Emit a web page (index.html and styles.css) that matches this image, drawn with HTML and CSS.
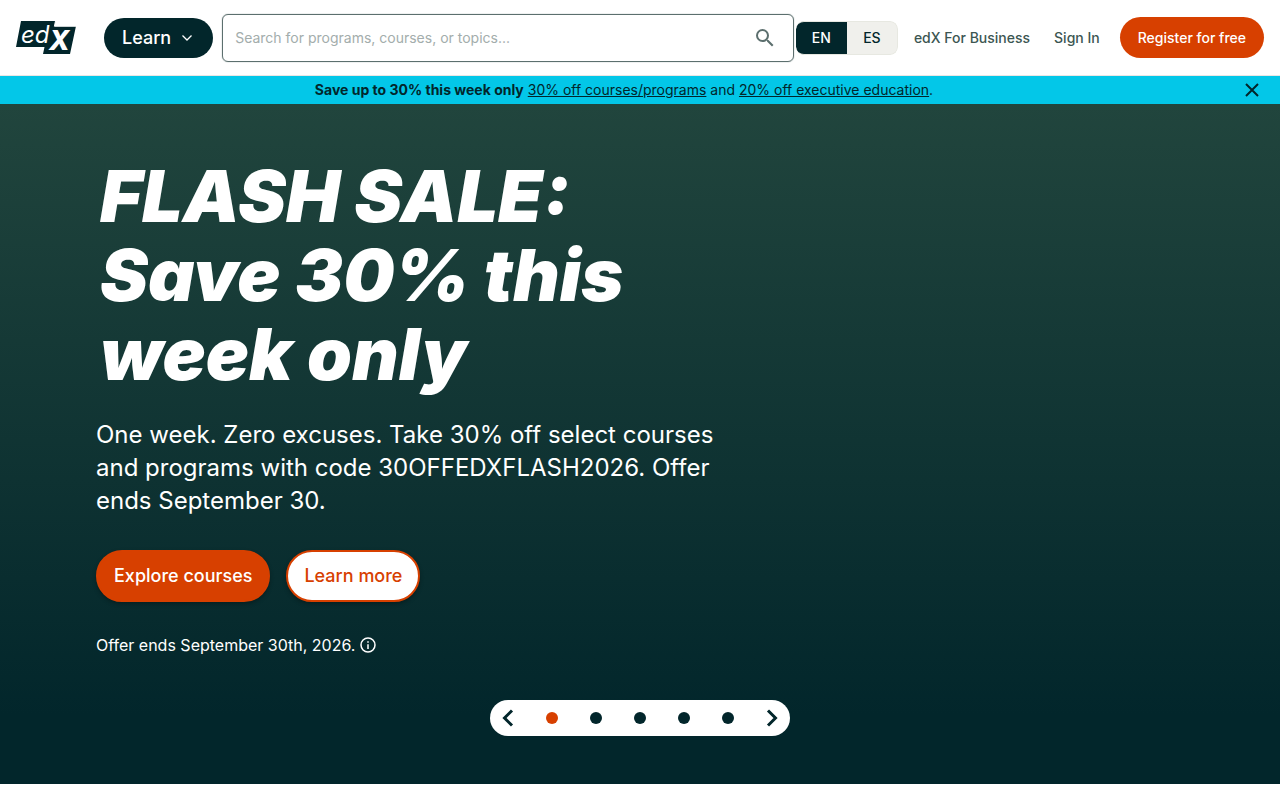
FILE: index.html
```
<!DOCTYPE html>
<html lang="en">
<head>
    <meta charset="UTF-8">
    <meta name="viewport" content="width=device-width, initial-scale=1.0">
    <title>edX</title>
    <link rel="stylesheet" href="styles.css">
</head>
<body>
    <header class="site-header">
        <a href="#" class="logo" aria-label="edX home">
            <svg width="60" height="34" viewBox="0 0 60 34">
                <path class="logo-box" d="M5 0H39.500L38.500 5H60L54 33H27L28.500 26H0Z"/>
                <path class="logo-line" d="M39.500 0L38.400 5.300H60"/>
                <text class="logo-ed" x="5" y="22">ed</text>
                <text class="logo-x" x="33" y="29">X</text>
            </svg>
        </a>

        <button class="learn-button" type="button">
            Learn
            <svg width="12" height="8" viewBox="0 0 12 8"><path d="M1.500 1.500L6 6L10.500 1.500"/></svg>
        </button>

        <form class="search" role="search">
            <input type="text" class="search-input" aria-label="Search" placeholder="Search for programs, courses, or topics...">
            <button class="search-button" type="button" aria-label="Submit search">
                <svg width="24" height="24" viewBox="0 0 24 24"><path d="M15.500 14h-.79l-.28-.27A6.470 6.470 0 0 0 16 9.500 6.500 6.500 0 1 0 9.500 16c1.610 0 3.090-.59 4.230-1.570l.27.28v.79l5 4.990L20.490 19l-4.990-5zm-6 0C7.010 14 5 11.990 5 9.500S7.010 5 9.500 5 14 7.010 14 9.500 11.990 14 9.500 14z"/></svg>
            </button>
        </form>

        <div class="language">
            <button class="language-option active" type="button">EN</button>
            <button class="language-option" type="button">ES</button>
        </div>

        <nav class="header-nav">
            <a href="#">edX For Business</a>
            <a href="#">Sign In</a>
        </nav>
        <a href="#" class="register-button">Register for free</a>
    </header>

    <div class="promo-bar">
        <p class="promo-text"><strong>Save up to 30% this week only</strong> <a href="#">30% off courses/programs</a> and <a href="#">20% off executive education</a>.</p>
        <button class="promo-close" type="button" aria-label="Close">
            <svg width="14" height="14" viewBox="0 0 14 14"><path d="M1 1L13 13M13 1L1 13"/></svg>
        </button>
    </div>

    <main class="hero">
        <div class="hero-content">
            <h1 class="hero-title">FLASH SALE: Save 30% this week only</h1>
            <p class="hero-text">One week. Zero excuses. Take 30% off select courses and programs with code 30OFFEDXFLASH2026. Offer ends September 30.</p>
            <div class="hero-actions">
                <a href="#" class="hero-button">Explore courses</a>
                <a href="#" class="hero-button outline">Learn more</a>
            </div>
            <p class="hero-note">
                Offer ends September 30th, 2026.
                <svg width="16" height="16" viewBox="0 0 16 16"><circle cx="8" cy="8" r="7"/><path d="M8 7.200V12M8 4.200V5.800"/></svg>
            </p>
        </div>

        <div class="carousel">
            <button class="arrow" type="button" aria-label="Previous slide">
                <svg width="12" height="18" viewBox="0 0 12 18"><path d="M10 1.500L2.500 9L10 16.500"/></svg>
            </button>
            <button class="dot active" type="button" aria-label="Slide 1"></button>
            <button class="dot" type="button" aria-label="Slide 2"></button>
            <button class="dot" type="button" aria-label="Slide 3"></button>
            <button class="dot" type="button" aria-label="Slide 4"></button>
            <button class="dot" type="button" aria-label="Slide 5"></button>
            <button class="arrow" type="button" aria-label="Next slide">
                <svg width="12" height="18" viewBox="0 0 12 18"><path d="M2 1.500L9.500 9L2 16.500"/></svg>
            </button>
        </div>
    </main>
</body>
</html>
```
FILE: styles.css
```
* {
    box-sizing: border-box;
    margin: 0;
    padding: 0;
}

body {
    background: #fff;
    color: #02262b;
    font-family: Inter, "Liberation Sans", sans-serif;
}

button {
    border: none;
    background: none;
    font-family: inherit;
    cursor: pointer;
}

a {
    color: inherit;
}

svg {
    display: block;
}

/* Header */
.site-header {
    display: flex;
    align-items: center;
    height: 76px;
    padding: 0 16px;
    border-bottom: 1px solid #eae6e5;
}

.logo {
    margin-right: 28px;
}

.logo svg {
    overflow: visible;
}

.logo-box {
    fill: #02262b;
}

.logo-line {
    fill: none;
    stroke: #fff;
    stroke-width: 1;
}

.logo-ed,
.logo-x {
    fill: #fff;
    font-style: italic;
}

.logo-ed {
    font-size: 24px;
}

.logo-x {
    font-size: 27px;
    font-weight: 800;
}

.learn-button {
    display: flex;
    align-items: center;
    gap: 10px;
    height: 40px;
    padding: 0 20px 0 18px;
    margin-right: 9px;
    border-radius: 20px;
    background: #02262b;
    color: #fff;
    font-size: 18px;
    font-weight: 500;
}

.learn-button svg {
    fill: none;
    stroke: #fff;
    stroke-width: 1.3;
}

.search {
    display: flex;
    align-items: center;
    flex: 1;
    height: 48px;
    margin-right: 2px;
    border: 1px solid #5c6f6e;
    border-radius: 6px;
    box-shadow: 0 0 1px #5c6f6e;
}

.search-input {
    flex: 1;
    min-width: 0;
    height: 100%;
    padding-left: 12px;
    border: none;
    outline: none;
    background: none;
    font-family: inherit;
    font-size: 14px;
}

.search-input::placeholder {
    color: #a3adac;
}

.search-button {
    padding: 0 16px;
}

.search-button svg {
    fill: #5c6f6e;
}

.language {
    display: flex;
    height: 34px;
    margin-right: 16px;
    border-radius: 8px;
    overflow: hidden;
}

.language-option {
    width: 51px;
    border: 1px solid #e7e8e1;
    border-left: none;
    border-radius: 0 8px 8px 0;
    background: #f0f0ec;
    color: #02262b;
    font-size: 14px;
    font-weight: 500;
}

.language-option.active {
    border-right: none;
    border-radius: 8px 0 0 8px;
    background: #02262b;
    color: #fff;
}

.header-nav {
    display: flex;
    gap: 24px;
    margin-right: 20px;
}

.header-nav a {
    color: #3c5652;
    font-size: 14px;
    font-weight: 500;
    text-decoration: none;
    white-space: nowrap;
}

.register-button {
    padding: 0 18px;
    border-radius: 21px;
    background: #d74000;
    color: #fff;
    font-size: 14px;
    font-weight: 500;
    line-height: 41px;
    text-decoration: none;
    white-space: nowrap;
}

/* Promo bar */
.promo-bar {
    display: flex;
    align-items: center;
    height: 28px;
    padding: 0 12px;
    background: #03c7e8;
}

.promo-text {
    flex: 1;
    font-size: 14px;
    line-height: 28px;
    text-align: center;
}

.promo-close {
    padding: 5px 9px;
}

.promo-close svg {
    fill: none;
    stroke: #02262b;
    stroke-width: 2;
}

/* Hero */
.hero {
    display: flex;
    flex-direction: column;
    padding: 52px 96px 48px;
    background: linear-gradient(#21453d, #02262b 90%);
    color: #fff;
}

.hero-content {
    max-width: 640px;
}

.hero-title {
    max-width: 600px;
    padding-left: 4px;
    margin-bottom: 25px;
    font-size: 72px;
    font-style: italic;
    font-weight: 900;
    line-height: 79px;
}

.hero-text {
    margin-bottom: 33px;
    font-size: 24px;
    line-height: 33px;
}

.hero-actions {
    display: flex;
    gap: 16px;
    margin-bottom: 31px;
}

.hero-button {
    padding: 0 16px;
    border: 2px solid #d74000;
    border-radius: 26px;
    background: #d74000;
    box-shadow: 0 2px 4px rgba(0, 0, 0, 0.3);
    color: #fff;
    font-size: 18px;
    font-weight: 500;
    line-height: 48px;
    text-decoration: none;
}

.hero-button.outline {
    background: #fff;
    color: #d74000;
}

.hero-note {
    display: flex;
    align-items: center;
    gap: 5px;
    margin-bottom: 43px;
    font-size: 16px;
    line-height: 24px;
}

.hero-note svg {
    fill: none;
    stroke: #fff;
    stroke-width: 1.5;
}

.carousel {
    display: flex;
    align-items: center;
    justify-content: space-between;
    align-self: center;
    width: 300px;
    height: 36px;
    padding: 0 12px;
    border-radius: 18px;
    background: #fff;
}

.arrow svg {
    fill: none;
    stroke: #02262b;
    stroke-width: 3;
}

.dot {
    width: 12px;
    height: 12px;
    border-radius: 50%;
    background: #02262b;
}

.dot.active {
    background: #d74000;
}
```
